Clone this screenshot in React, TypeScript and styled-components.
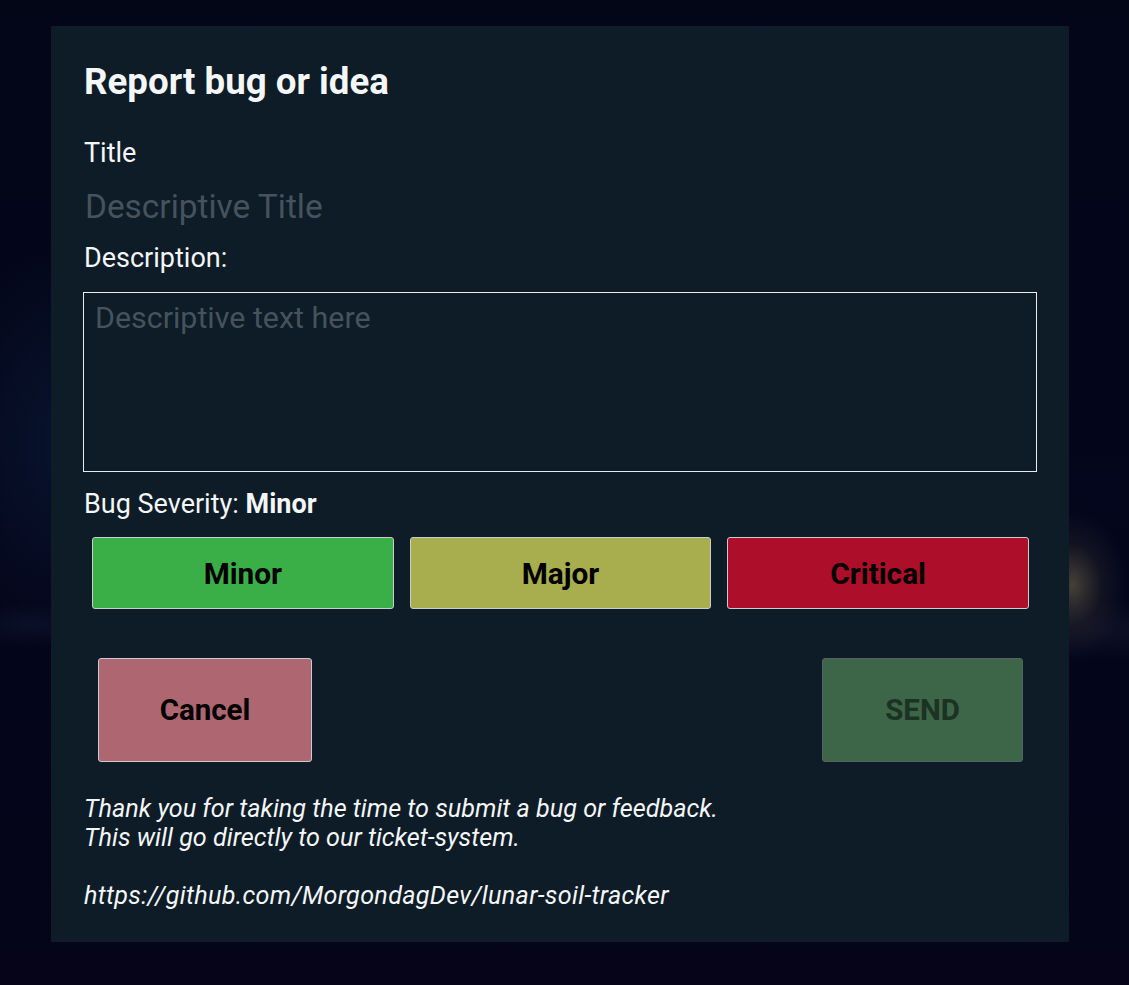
import React from "react";
import styled, { createGlobalStyle } from "styled-components";

const Global = createGlobalStyle`
  html, body {
    margin: 0;
    padding: 0;
    height: 100%;
  }
  body {
    font-family: Roboto, "Liberation Sans", sans-serif;
    background-color: #03061a;
    background-image:
      radial-gradient(ellipse 55px 75px at 1072px 585px, rgba(80, 74, 60, 0.85), rgba(45, 42, 45, 0.35) 55%, rgba(0,0,0,0) 100%),
      radial-gradient(ellipse 120px 30px at 1110px 630px, rgba(40, 40, 60, 0.3), rgba(0,0,0,0) 100%),
      radial-gradient(ellipse 120px 200px at 60px 440px, rgba(15, 35, 65, 0.45), rgba(0,0,0,0) 100%),
      radial-gradient(ellipse 90px 22px at 30px 625px, rgba(25, 40, 70, 0.3), rgba(0,0,0,0) 100%),
      linear-gradient(180deg, #020617 0%, #03061c 50%, #050418 100%);
    min-height: 985px;
  }
`;

const Screen = styled.div`
  width: 1129px;
  height: 985px;
  box-sizing: border-box;
  padding: 26px 60px 0 51px;
`;

const Panel = styled.div`
  width: 1018px;
  height: 916px;
  box-sizing: border-box;
  background: #0d1c27;
  padding: 34px 32px 32px 32px;
  display: flex;
  flex-direction: column;
  color: #f4f6f8;
`;

const Heading = styled.h1`
  margin: 0;
  font-size: 36.7px;
  line-height: 44px;
  font-weight: 700;
  padding-left: 1px;
`;

const Label = styled.div<{ $top: number }>`
  margin-top: ${(p) => p.$top}px;
  font-size: 27px;
  line-height: 32px;
  font-weight: 400;
  padding-left: 1px;
`;

const TitleInput = styled.input`
  margin-top: 17px;
  height: 40px;
  padding: 0 0 0 2px;
  border: none;
  outline: none;
  background: transparent;
  color: #f4f6f8;
  font-family: Roboto, sans-serif;
  font-size: 33.4px;
  &::placeholder {
    color: #46525c;
  }
`;

const TextArea = styled.textarea`
  margin-top: 18px;
  height: 180px;
  box-sizing: border-box;
  width: 100%;
  border: 1px solid #e8ecee;
  background: transparent;
  color: #f4f6f8;
  font-family: Roboto, sans-serif;
  font-size: 30.4px;
  line-height: 36px;
  padding: 7px 11px;
  resize: none;
  outline: none;
  &::placeholder {
    color: #46525c;
  }
`;

const Strong = styled.span`
  font-weight: 700;
`;

const SeverityRow = styled.div`
  margin-top: 17px;
  padding: 0 8px 0 9px;
  display: grid;
  grid-template-columns: repeat(3, 1fr);
  gap: 16px;
`;

const SeverityButton = styled.button<{ $bg: string }>`
  height: 72px;
  background: ${(p) => p.$bg};
  border: 1px solid #c9cdcf;
  border-radius: 3px;
  color: #000;
  font-family: Roboto, sans-serif;
  font-weight: 700;
  font-size: 29.8px;
  cursor: pointer;
`;

const ActionRow = styled.div`
  margin-top: 49px;
  padding: 0 14px 0 15px;
  display: flex;
  justify-content: space-between;
`;

const ActionButton = styled.button<{ $bg: string; $w: number; $border: string; $fg: string }>`
  width: ${(p) => p.$w}px;
  height: 104px;
  background: ${(p) => p.$bg};
  border: 1px solid ${(p) => p.$border};
  border-radius: 3px;
  color: ${(p) => p.$fg};
  font-family: Roboto, sans-serif;
  font-weight: 700;
  font-size: 29.5px;
  cursor: pointer;
`;

const Footer = styled.p<{ $top: number; $spacing: number }>`
  margin: ${(p) => p.$top}px 0 0 0;
  padding-left: 1px;
  font-style: italic;
  font-size: 25.2px;
  line-height: 29px;
  letter-spacing: ${(p) => p.$spacing}px;
  white-space: pre-line;
`;

export default function App() {
  return (
    <>
      <Global />
      <Screen>
        <Panel>
          <Heading>Report bug or idea</Heading>
          <Label $top={33}>Title</Label>
          <TitleInput placeholder="Descriptive Title" />
          <Label $top={16}>Description:</Label>
          <TextArea placeholder="Descriptive text here" />
          <Label $top={16}>
            Bug Severity: <Strong>Minor</Strong>
          </Label>
          <SeverityRow>
            <SeverityButton $bg="#3aae47">Minor</SeverityButton>
            <SeverityButton $bg="#a8ad4e">Major</SeverityButton>
            <SeverityButton $bg="#ad0e2a">Critical</SeverityButton>
          </SeverityRow>
          <ActionRow>
            <ActionButton $bg="#ae6670" $w={214} $border="#c9cdcf" $fg="#000">
              Cancel
            </ActionButton>
            <ActionButton $bg="#3d6548" $w={201} $border="#56645f" $fg="#1c3222">
              SEND
            </ActionButton>
          </ActionRow>
          <Footer $top={32} $spacing={0}>
            {"Thank you for taking the time to submit a bug or feedback.\nThis will go directly to our ticket-system."}
          </Footer>
          <Footer $top={29} $spacing={0.3}>
            https://github.com/MorgondagDev/lunar-soil-tracker
          </Footer>
        </Panel>
      </Screen>
    </>
  );
}
